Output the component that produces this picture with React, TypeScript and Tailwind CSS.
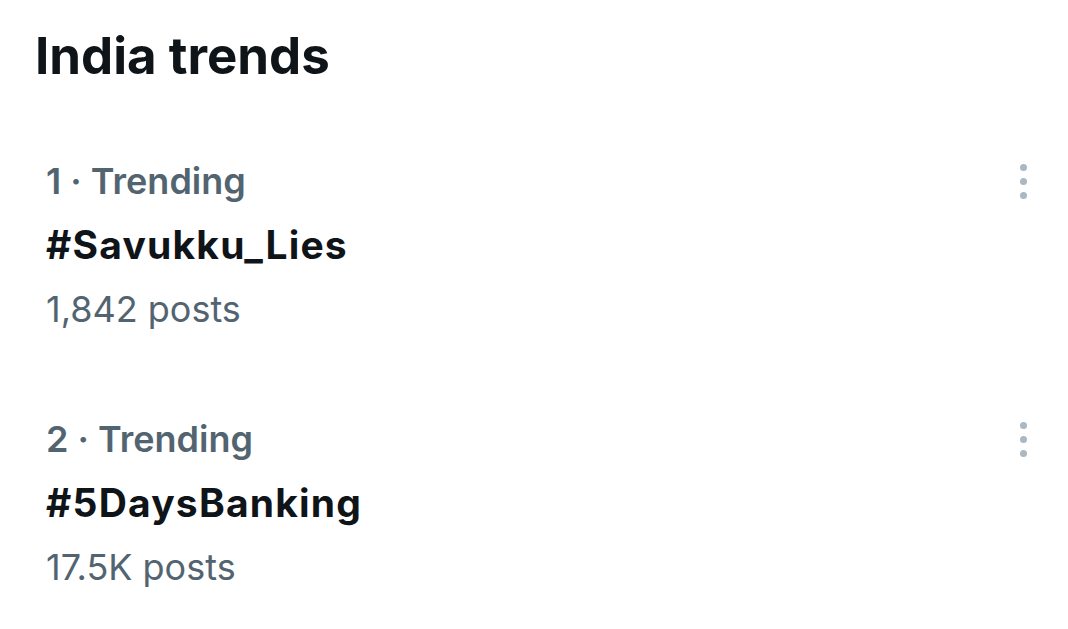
import React from 'react';

type Trend = {
  rank: number;
  tag: string;
  posts: string;
};

const trends: Trend[] = [
  { rank: 1, tag: '#Savukku_Lies', posts: '1,842 posts' },
  { rank: 2, tag: '#5DaysBanking', posts: '17.5K posts' },
];

function MoreDots() {
  return (
    <button className="flex h-[40px] w-[20px] flex-col items-center justify-center gap-[7px]">
      <span className="h-[7px] w-[7px] rounded-full bg-[#aab8c2]" />
      <span className="h-[7px] w-[7px] rounded-full bg-[#aab8c2]" />
      <span className="h-[7px] w-[7px] rounded-full bg-[#aab8c2]" />
    </button>
  );
}

function TrendRow({ trend }: { trend: Trend }) {
  return (
    <div className="flex items-start justify-between pl-[46px] pr-[35px]">
      <div className="flex flex-col">
        <div className="h-[64px] text-[36px] leading-[64px] font-semibold text-[#536471]">
          {trend.rank} · Trending
        </div>
        <div className="h-[64px] text-[39px] leading-[64px] font-bold tracking-[1.2px] text-[#0f1419]">
          {trend.tag}
        </div>
        <div className="h-[64px] text-[36px] leading-[64px] text-[#536471]">
          {trend.posts}
        </div>
      </div>
      <div className="mt-[12px]">
        <MoreDots />
      </div>
    </div>
  );
}

export default function App() {
  return (
    <div
      className="h-[629px] w-[1068px] overflow-hidden bg-white"
      style={{ fontFamily: 'Inter, "Noto Sans", sans-serif' }}
    >
      <h1 className="pl-[35px] pt-[26px] text-[51px] leading-[60px] font-bold text-[#0f1419]">
        India trends
      </h1>
      <div className="mt-[63px] flex flex-col gap-[66px]">
        {trends.map((t) => (
          <TrendRow key={t.rank} trend={t} />
        ))}
      </div>
    </div>
  );
}
